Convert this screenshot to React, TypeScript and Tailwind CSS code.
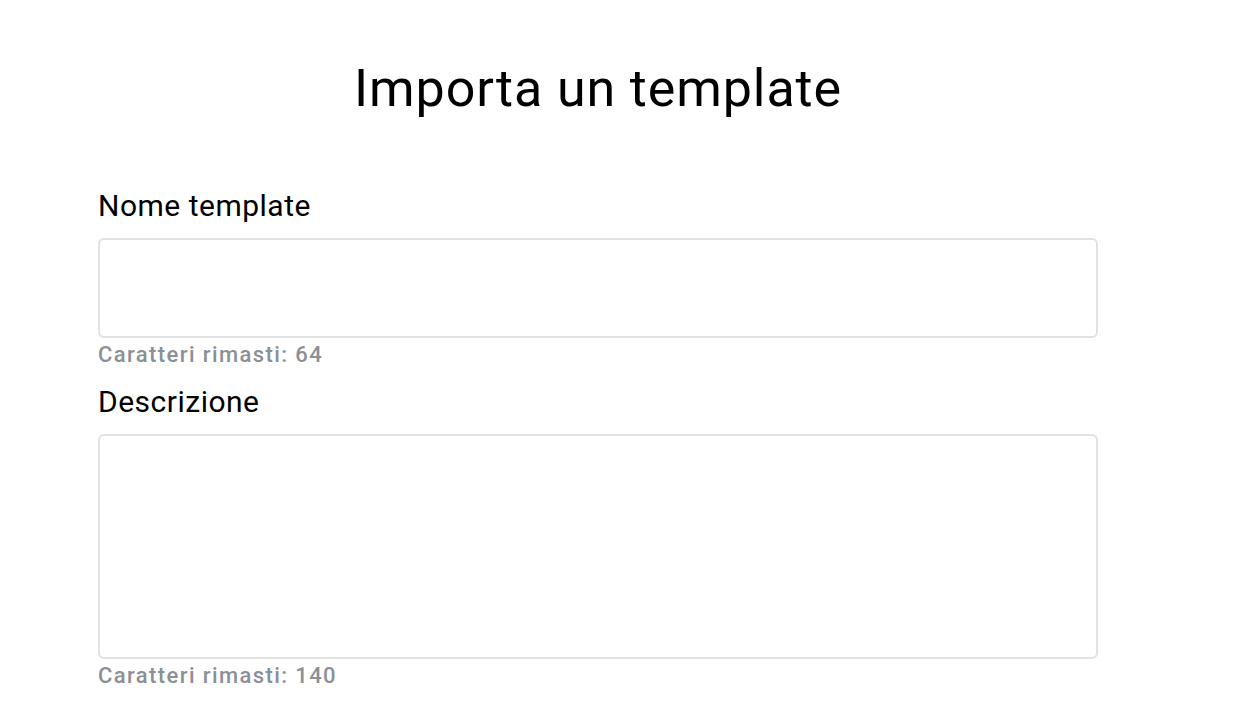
import { useState } from 'react'

const NAME_MAX = 64
const DESC_MAX = 140

export default function App() {
  const [name, setName] = useState('')
  const [description, setDescription] = useState('')

  return (
    <div className="min-h-screen bg-white font-['Roboto',sans-serif] text-black">
      <div className="ml-[98px] w-[1000px] pt-[63px]">
        <h1 className="text-center text-[52px] leading-none font-normal tracking-[0.9px]">
          Importa un template
        </h1>

        <form className="mt-[76px] flex flex-col">
          <label htmlFor="template-name" className="text-[30px] leading-none tracking-[0.5px]">
            Nome template
          </label>
          <input
            id="template-name"
            type="text"
            maxLength={NAME_MAX}
            value={name}
            onChange={(e) => setName(e.target.value)}
            className="mt-[17px] h-[100px] w-full rounded-md border-2 border-[#e2e2e2] px-4 text-[24px] outline-none"
          />
          <p className="mt-[6px] text-[22px] leading-none font-medium tracking-[1.4px] text-[#8b8f96]">
            Caratteri rimasti: {NAME_MAX - name.length}
          </p>

          <label htmlFor="template-description" className="mt-[21px] text-[30px] leading-none tracking-[0.5px]">
            Descrizione
          </label>
          <textarea
            id="template-description"
            maxLength={DESC_MAX}
            value={description}
            onChange={(e) => setDescription(e.target.value)}
            className="mt-[17px] h-[225px] w-full resize-none rounded-md border-2 border-[#e2e2e2] p-4 text-[24px] outline-none"
          />
          <p className="mt-[6px] text-[22px] leading-none font-medium tracking-[1.4px] text-[#8b8f96]">
            Caratteri rimasti: {DESC_MAX - description.length}
          </p>
        </form>
      </div>
    </div>
  )
}
